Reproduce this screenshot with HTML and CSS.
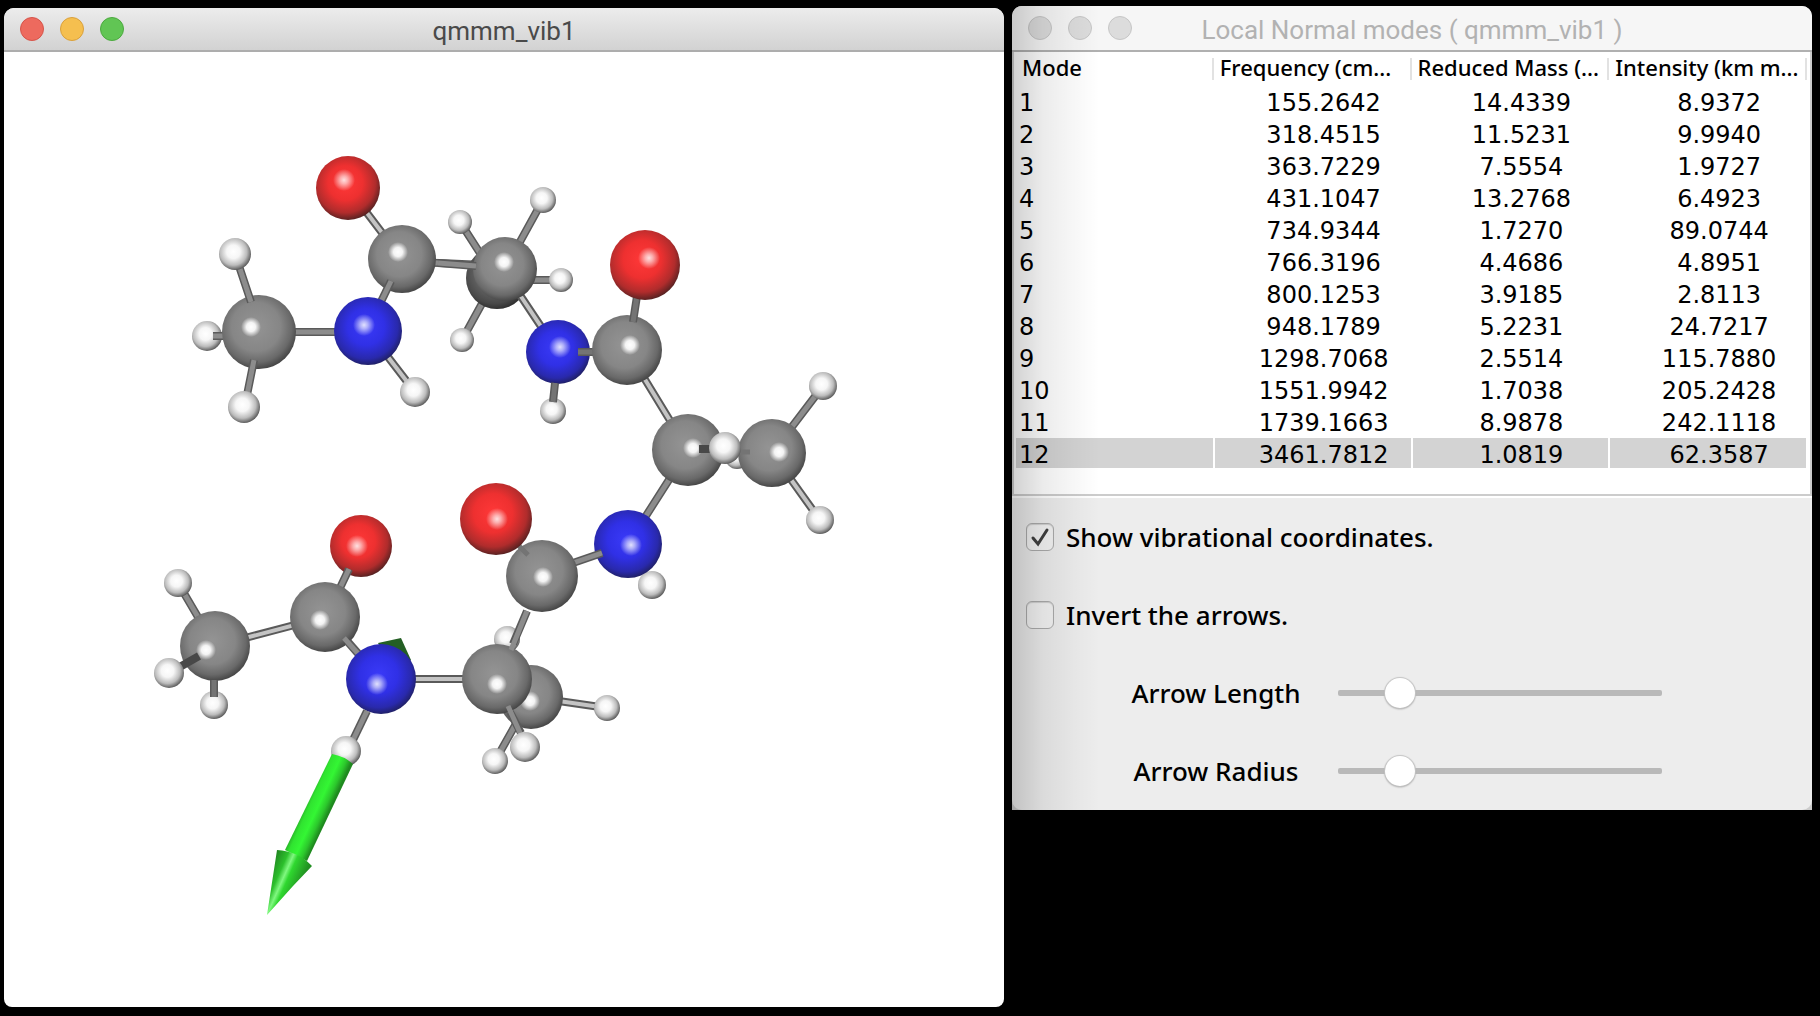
FILE: index.html
```html
<!DOCTYPE html>
<html lang="en">
<head>
<meta charset="utf-8">
<title>qmmm_vib1</title>
<link rel="stylesheet" href="styles.css">
</head>
<body>
<main class="desktop">
  <section class="window viewer">
    <header class="titlebar">
      <div class="lights">
        <button class="light close" aria-label="Close"></button>
        <button class="light minimize" aria-label="Minimize"></button>
        <button class="light maximize" aria-label="Zoom"></button>
      </div>
      <h1 class="title">qmmm_vib1</h1>
    </header>
    <svg class="molecule" viewBox="4 52 1000 955" role="img" aria-label="Molecule with vibration arrow">
      <defs>
        <radialGradient id="carbon" cx=".46" cy=".43" r=".6">
          <stop offset="0" stop-color="#949494"/><stop offset=".55" stop-color="#868686"/><stop offset=".8" stop-color="#696969"/><stop offset="1" stop-color="#3c3c3c"/>
        </radialGradient>
        <radialGradient id="oxygen" cx=".46" cy=".42" r=".6">
          <stop offset="0" stop-color="#ff3838"/><stop offset=".45" stop-color="#ee3030"/><stop offset=".78" stop-color="#b02c2c"/><stop offset="1" stop-color="#4c2020"/>
        </radialGradient>
        <radialGradient id="nitrogen" cx=".47" cy=".44" r=".6">
          <stop offset="0" stop-color="#3a3af8"/><stop offset=".45" stop-color="#3030e6"/><stop offset=".78" stop-color="#2929ac"/><stop offset="1" stop-color="#1d1d4c"/>
        </radialGradient>
        <radialGradient id="hydrogen" cx=".45" cy=".43" r=".6">
          <stop offset="0" stop-color="#fff"/><stop offset=".35" stop-color="#f6f6f6"/><stop offset=".7" stop-color="#bcbcbc"/><stop offset="1" stop-color="#4c4c4c"/>
        </radialGradient>
        <radialGradient id="shine">
          <stop offset="0" stop-color="#fff"/><stop offset=".45" stop-color="#fff" stop-opacity=".9"/><stop offset="1" stop-color="#fff" stop-opacity="0"/>
        </radialGradient>
        <radialGradient id="glow">
          <stop offset="0" stop-color="#fff" stop-opacity=".85"/><stop offset=".35" stop-color="#fff" stop-opacity=".6"/><stop offset="1" stop-color="#fff" stop-opacity="0"/>
        </radialGradient>
        <linearGradient id="shaft" gradientUnits="userSpaceOnUse" x1="306" y1="798" x2="330" y2="809">
          <stop offset="0" stop-color="#239a23"/><stop offset=".25" stop-color="#30e430"/><stop offset=".55" stop-color="#34f634"/><stop offset=".8" stop-color="#2cc82c"/><stop offset="1" stop-color="#1f8a1f"/>
        </linearGradient>
        <linearGradient id="cone" gradientUnits="userSpaceOnUse" x1="270" y1="862" x2="304" y2="877">
          <stop offset="0" stop-color="#1f7c1f"/><stop offset=".35" stop-color="#2cc02c"/><stop offset=".5" stop-color="#80f880"/><stop offset=".62" stop-color="#2fd82f"/><stop offset="1" stop-color="#229022"/>
        </linearGradient>
      </defs>

      <!-- upper left: methyl, amide, carbonyl -->
      <g class="edge"><path d="M348 188L402 259M259 332H368M368 331L415 392M402 262L440 263L505 266M505 269L543 200M496 278L460 222M496 278L462 340M500 280H561"/></g>
      <g class="core"><path d="M259 332H368M402 262L440 263L505 266M505 269L543 200M496 278L460 222M496 278L462 340M500 280H561"/></g>
      <g class="lit"><path d="M348 188L402 259M368 331L415 392"/></g>
      <circle class="h" cx="207" cy="336" r="15"/>
      <path class="edge" d="M213 336H230"/><path class="core" d="M213 336H230"/>
      <circle class="c" cx="259" cy="332" r="37"/><circle class="s" cx="251" cy="327" r="10"/>
      <path class="edge" d="M239 266L251 302M254 360L247 395"/><path class="core" d="M239 266L251 302M254 360L247 395"/>
      <circle class="h" cx="235" cy="254" r="16"/>
      <circle class="h" cx="244" cy="407" r="16"/>
      <circle class="h" cx="415" cy="392" r="15"/>
      <circle class="o" cx="348" cy="188" r="32"/><circle class="soft" cx="344" cy="180" r="11"/>
      <circle class="c" cx="402" cy="259" r="34"/><circle class="s" cx="398" cy="252" r="10"/>
      <path class="edge" d="M391 281L377 310"/><path class="core" d="M391 281L377 310"/>
      <circle class="n" cx="368" cy="331" r="34"/><circle class="soft" cx="364" cy="325" r="11"/>

      <!-- ring of the peptide backbone -->
      <circle class="h" cx="460" cy="222" r="12"/>
      <circle class="h" cx="462" cy="340" r="12"/>
      <circle class="h" cx="543" cy="200" r="13"/>
      <circle class="h" cx="561" cy="280" r="12"/>
      <circle class="c" cx="497" cy="278" r="31"/>
      <circle class="shade" cx="497" cy="278" r="31"/>
      <path class="edge" d="M510 280L558 352M627 350L688 450M688 450L628 544M772 453L823 386M772 453L820 520"/>
      <path class="lit" d="M510 280L558 352M627 350L688 450M772 453L820 520"/>
      <path class="core" d="M688 450L628 544M772 453L823 386"/>
      <circle class="c" cx="505" cy="269" r="32"/><circle class="s" cx="504" cy="262" r="10"/>
      <path class="edge" d="M438 263L476 266"/><path class="core" d="M438 263L476 266"/>
      <circle class="h" cx="553" cy="411" r="13"/>
      <circle class="n" cx="558" cy="352" r="32"/><circle class="soft" cx="560" cy="347" r="11"/>
      <path class="edge" d="M578 352H600M555 383L553 402"/><path class="core dim" d="M578 352H600M555 383L553 402"/>
      <circle class="c" cx="627" cy="350" r="35"/><circle class="s" cx="630" cy="345" r="10"/>
      <path class="edge" d="M637 296L633 322"/><path class="core dim" d="M637 296L633 322"/>
      <circle class="o" cx="645" cy="265" r="35"/><circle class="soft" cx="649" cy="258" r="11"/>
      <circle class="h" cx="823" cy="386" r="14"/>
      <circle class="h" cx="820" cy="520" r="14"/>
      <circle class="c" cx="688" cy="450" r="36"/><circle class="s" cx="693" cy="448" r="10"/>
      <circle class="h" cx="737" cy="457" r="12"/>
      <circle class="c" cx="772" cy="453" r="34"/><circle class="s" cx="779" cy="452" r="10"/>
      <path class="dark" d="M699 449H718"/>
      <path class="core dim" d="M735 452H750"/>
      <circle class="h" cx="725" cy="448" r="16"/>
      <circle class="h" cx="652" cy="585" r="14"/>
      <circle class="n" cx="628" cy="544" r="34"/><circle class="soft" cx="631" cy="545" r="11"/>
      <path class="edge" d="M570 564L602 553"/><path class="core" d="M570 564L602 553"/>
      <circle class="c" cx="542" cy="576" r="36"/><circle class="s" cx="543" cy="577" r="10"/>
      <path class="core dim" d="M513 540L528 555"/>
      <circle class="o" cx="496" cy="519" r="36"/><circle class="soft" cx="497" cy="519" r="11"/>

      <!-- lower left: second methyl and amide -->
      <path class="edge" d="M215 646L178 583M215 646L325 617M381 679H497M531 697L607 708M531 697L495 761"/>
      <path class="lit" d="M215 646L325 617M381 679H497M531 697L607 708"/>
      <path class="core" d="M215 646L178 583M531 697L495 761"/>
      <circle class="h" cx="178" cy="583" r="14"/>
      <circle class="c" cx="215" cy="646" r="35"/><circle class="s" cx="206" cy="650" r="10"/>
      <circle class="h" cx="214" cy="705" r="14"/>
      <path class="edge" d="M214 680V697"/><path class="core dim" d="M214 680V697"/>
      <path class="dark" d="M199 656L178 668"/>
      <circle class="h" cx="169" cy="673" r="15"/>
      <circle class="o" cx="361" cy="546" r="31"/><circle class="soft" cx="357" cy="546" r="11"/>
      <path class="edge" d="M349 569L339 590"/><path class="core" d="M349 569L339 590"/>
      <circle class="c" cx="325" cy="617" r="35"/><circle class="s" cx="320" cy="620" r="10"/>
      <path class="edge" d="M348 642L362 658"/><path class="core" d="M344 638L362 658"/>
      <path class="tail" d="M378 643L401 638L411 660L395 672z"/>
      <circle class="n" cx="381" cy="679" r="35"/><circle class="soft" cx="377" cy="684" r="11"/>
      <circle class="h" cx="507" cy="639" r="13"/>
      <circle class="h" cx="607" cy="708" r="13"/>
      <circle class="h" cx="495" cy="761" r="13"/>
      <circle class="c" cx="531" cy="697" r="32"/><circle class="s" cx="530" cy="701" r="10"/>
      <circle class="c" cx="497" cy="679" r="35"/><circle class="s" cx="497" cy="684" r="10"/>
      <path class="edge" d="M527 611L513 644M510 712L521 733"/><path class="core" d="M527 611L511 650M508 706L521 735"/>
      <circle class="h" cx="525" cy="747" r="15"/>
      <path class="edge" d="M367 711L352 742"/><path class="core" d="M367 711L352 742"/>
      <circle class="h" cx="346" cy="751" r="15"/>
      <path fill="url(#shaft)" d="M332 754Q344 756 353 764L307 861L285 850z"/>
      <path fill="url(#cone)" d="M277 850Q298 851 312 866L293 886L267 915z"/>
    </svg>
  </section>

  <section class="window modes">
    <header class="titlebar">
      <div class="lights">
        <button class="light" aria-label="Close"></button>
        <button class="light" aria-label="Minimize"></button>
        <button class="light" aria-label="Zoom"></button>
      </div>
      <h2 class="title">Local Normal modes ( qmmm_vib1 )</h2>
    </header>
    <div class="table-pane">
      <table class="mode-table">
        <thead><tr><th scope="col">Mode</th><th scope="col">Frequency (cm...</th><th scope="col">Reduced Mass (...</th><th scope="col">Intensity (km m...</th></tr></thead>
        <tbody>
          <tr><td>1</td><td>155.2642</td><td>14.4339</td><td>8.9372</td></tr>
          <tr><td>2</td><td>318.4515</td><td>11.5231</td><td>9.9940</td></tr>
          <tr><td>3</td><td>363.7229</td><td>7.5554</td><td>1.9727</td></tr>
          <tr><td>4</td><td>431.1047</td><td>13.2768</td><td>6.4923</td></tr>
          <tr><td>5</td><td>734.9344</td><td>1.7270</td><td>89.0744</td></tr>
          <tr><td>6</td><td>766.3196</td><td>4.4686</td><td>4.8951</td></tr>
          <tr><td>7</td><td>800.1253</td><td>3.9185</td><td>2.8113</td></tr>
          <tr><td>8</td><td>948.1789</td><td>5.2231</td><td>24.7217</td></tr>
          <tr><td>9</td><td>1298.7068</td><td>2.5514</td><td>115.7880</td></tr>
          <tr><td>10</td><td>1551.9942</td><td>1.7038</td><td>205.2428</td></tr>
          <tr><td>11</td><td>1739.1663</td><td>8.9878</td><td>242.1118</td></tr>
          <tr class="selected"><td>12</td><td>3461.7812</td><td>1.0819</td><td>62.3587</td></tr>
        </tbody>
      </table>
    </div>
    <form class="controls">
      <label class="check-row"><input type="checkbox" class="check" checked>Show vibrational coordinates.</label>
      <label class="check-row"><input type="checkbox" class="check">Invert the arrows.</label>
      <div class="slider-row"><label for="length">Arrow Length</label><input id="length" class="slider" type="range" value="16"></div>
      <div class="slider-row"><label for="radius">Arrow Radius</label><input id="radius" class="slider" type="range" value="16"></div>
    </form>
  </section>
</main>
</body>
</html>
```
FILE: styles.css
```css
* { box-sizing: border-box; }
body { margin: 0; background: #000; color: #000; font-family: "Noto Sans", sans-serif; }
.desktop { display: grid; grid-template-columns: 1000fr 800fr; gap: 8px; align-items: start; padding: 6px 8px 8px 4px; }
.window { border-radius: 10px 10px 8px 8px; overflow: hidden; }
.viewer { margin-top: 2px; background: #fff; }
.modes { position: relative; background: #ccc; border-radius: 10px 10px 0 0; }
/* shadow that the front window casts over this one */
.modes::after { content: ""; position: absolute; inset: 0 auto 0 0; width: 88px; pointer-events: none; background: linear-gradient(to right, rgba(0,0,0,.18), rgba(0,0,0,.08) 35%, rgba(0,0,0,.03) 70%, transparent); }

.titlebar { display: grid; grid-template-columns: 1fr auto 1fr; align-items: center; height: 44px; padding: 0 16px; border-bottom: 2px solid #adadad; background: linear-gradient(#ececec, #d2d2d2); }
.modes .titlebar { height: 46px; background: #f6f6f6; border-color: #b0b0b0; }
.lights { display: flex; gap: 16px; }
.light { width: 24px; height: 24px; padding: 0; border: 1px solid #c6c6c6; border-radius: 50%; background: #dcdcdc; }
.close { background: #ed6a5e; border-color: #d5544a; }
.minimize { background: #f5bf4f; border-color: #d9a03c; }
.maximize { background: #61c554; border-color: #4ca93f; }
.title { margin: 0; padding-top: 3px; font: 400 26px/32px Roboto, sans-serif; color: #4a4a4a; }
.modes .title { color: #b2b2b2; }
.molecule { display: block; width: 100%; height: auto; }

.c { fill: url(#carbon); }
.o { fill: url(#oxygen); }
.n { fill: url(#nitrogen); }
.h { fill: url(#hydrogen); }
.s { fill: url(#shine); }
.soft { fill: url(#glow); }
.shade { fill: #000; opacity: .3; }
.edge, .core, .lit, .dark { fill: none; }
.edge { stroke: #5a5a5a; stroke-width: 8px; }
.core { stroke: #8c8c8c; stroke-width: 5px; }
.dim { stroke: #747474; }
.lit { stroke: #c4c4c4; stroke-width: 4px; }
.dark { stroke: #484848; stroke-width: 8px; }
.tail { fill: #245f24; }

.table-pane { padding: 0 2px 24px; border: 2px solid #ccc; border-top: 0; background: #fff; }
.mode-table { width: 100%; table-layout: fixed; border-collapse: collapse; font: 24px/30px "DejaVu Sans", sans-serif; }
.mode-table th { height: 34px; padding: 0 0 4px 6px; font: 500 22px/24px "Noto Sans", sans-serif; text-align: left; white-space: nowrap; background: linear-gradient(#e2e2e2, #e2e2e2) right 6px / 2px 22px no-repeat; }
.mode-table td { height: 32px; padding: 2px 0 0 22px; border-right: 2px solid #fff; text-align: center; background-clip: padding-box; }
.mode-table td:first-child { padding-left: 3px; text-align: left; }
.selected td { background: linear-gradient(#d3d3d3, #d3d3d3) 0 0 / 100% 30px no-repeat; }

.controls { border-top: 2px solid #fff; border-radius: 0 0 10px 10px; background: #ededed; font-size: 26px; font-weight: 500; line-height: 32px; }
.check-row { display: flex; align-items: center; gap: 12px; height: 78px; padding-left: 14px; }
.check { appearance: none; width: 28px; height: 28px; margin: 0; border: 1px solid #acacac; border-radius: 6px; background: #f4f4f4; box-shadow: inset 0 1px 1px #d0d0d0; }
.check:checked { background: #f4f4f4 url("data:image/svg+xml,%3Csvg xmlns='http://www.w3.org/2000/svg' viewBox='0 0 26 26'%3E%3Cpath d='M6 14L11 20L20 6' fill='none' stroke='%23404040' stroke-width='3' stroke-linecap='round'/%3E%3C/svg%3E") center / 26px 26px no-repeat; }
.slider-row { display: grid; grid-template-columns: 244fr 324fr; align-items: center; height: 78px; padding: 0 150px 0 82px; }
.slider-row label { text-align: center; }
.slider { appearance: none; width: 100%; height: 32px; margin: 0; background: transparent; }
.slider::-webkit-slider-runnable-track { height: 6px; border-radius: 2px; background: #b9b9b9; }
.slider::-webkit-slider-thumb { appearance: none; width: 30px; height: 30px; margin-top: -12px; border-radius: 50%; background: #fff; box-shadow: 0 0 1px 1px #c4c4c4, 0 1px 2px #888; }
```
